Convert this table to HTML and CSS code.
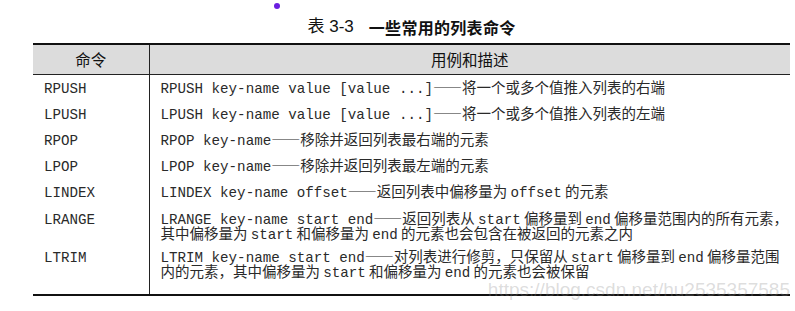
FILE: index.html
```html
<!DOCTYPE html>
<html lang="zh-CN">
<head>
  <meta charset="UTF-8" />
  <meta name="viewport" content="width=device-width, initial-scale=1.0"/>
  <title>表 3-3 一些常用的列表命令</title>
  <link rel="stylesheet" href="styles.css">
</head>
<body>
  <div class="page">
    <span class="dot"></span>
    <h1 class="caption"><span class="num">表 3-3</span><span class="name">一些常用的列表命令</span></h1>

    <table class="cmds">
      <colgroup><col class="c1"><col></colgroup>
      <thead>
        <tr><th class="col-cmd">命令</th><th>用例和描述</th></tr>
      </thead>
      <tbody>
        <tr>
          <td class="col-cmd"><div class="ln"><span class="k">RPUSH</span></div></td>
          <td><div class="ln"><span class="k">RPUSH key-name value [value ...]</span>——将一个或多个值推入列表的右端</div></td>
        </tr>
        <tr>
          <td class="col-cmd"><div class="ln"><span class="k">LPUSH</span></div></td>
          <td><div class="ln"><span class="k">LPUSH key-name value [value ...]</span>——将一个或多个值推入列表的左端</div></td>
        </tr>
        <tr>
          <td class="col-cmd"><div class="ln"><span class="k">RPOP</span></div></td>
          <td><div class="ln"><span class="k">RPOP key-name</span>——移除并返回列表最右端的元素</div></td>
        </tr>
        <tr>
          <td class="col-cmd"><div class="ln"><span class="k">LPOP</span></div></td>
          <td><div class="ln"><span class="k">LPOP key-name</span>——移除并返回列表最左端的元素</div></td>
        </tr>
        <tr>
          <td class="col-cmd"><div class="ln"><span class="k">LINDEX</span></div></td>
          <td><div class="ln"><span class="k">LINDEX key-name offset</span>——返回列表中偏移量为 <span class="k">offset</span> 的元素</div></td>
        </tr>
        <tr class="multi">
          <td class="col-cmd"><div class="ln"><span class="k">LRANGE</span></div></td>
          <td>
            <div class="ln"><span class="k">LRANGE key-name start end</span>——返回列表从 <span class="k">start</span> 偏移量到 <span class="k">end</span> 偏移量范围内的所有元素，</div>
            <div class="ln">其中偏移量为 <span class="k">start</span> 和偏移量为 <span class="k">end</span> 的元素也会包含在被返回的元素之内</div>
          </td>
        </tr>
        <tr class="multi last">
          <td class="col-cmd"><div class="ln"><span class="k">LTRIM</span></div></td>
          <td>
            <div class="ln"><span class="k">LTRIM key-name start end</span>——对列表进行修剪，只保留从 <span class="k">start</span> 偏移量到 <span class="k">end</span> 偏移量范围</div>
            <div class="ln">内的元素，其中偏移量为 <span class="k">start</span> 和偏移量为 <span class="k">end</span> 的元素也会被保留</div>
          </td>
        </tr>
      </tbody>
    </table>

    <div class="mark">https://blog.csdn.net/hu2535357585</div>
  </div>
</body>
</html>
```

FILE: styles.css
```css
* { box-sizing: border-box; margin: 0; padding: 0; }
body {
  background: #fff;
  color: #222;
  font-family: "Noto Sans CJK SC", "Liberation Sans", sans-serif;
}
.page {
  position: relative;
  width: 795px;
  height: 311px;
  padding: 17px 5px 0 33px;
}
.dot {
  position: absolute;
  left: 274px;
  top: 3px;
  width: 6px;
  height: 6px;
  border-radius: 50%;
  background: #6a1ee0;
}
.caption {
  display: flex;
  justify-content: center;
  align-items: center;
  height: 20px;
  margin-bottom: 6px;
  font-size: 16px;
  font-weight: normal;
  line-height: 20px;
  color: #111;
}
.caption .num {
  font-family: "Liberation Sans", "Noto Sans CJK SC", sans-serif;
  font-size: 17px;
  margin-right: 15px;
}
.caption .name {
  font-weight: bold;
  font-size: 16px;
  letter-spacing: 0.3px;
}
.cmds {
  width: 757px;
  table-layout: fixed;
  border-collapse: collapse;
  border-top: 2px solid #111;
}
.cmds .c1 { width: 116px; }
.cmds th {
  background: #dcdcdc;
  font-size: 15.5px;
  font-weight: normal;
  height: 30px;
  line-height: 18px;
  text-align: center;
  border-bottom: 1px solid #222;
  color: #111;
}
.cmds td {
  padding: 5px 11px 7px;
  font-size: 14.5px;
  white-space: nowrap;
  vertical-align: top;
  color: #2a2a2a;
}
.cmds .col-cmd {
  border-right: 1px solid #222;
}
.cmds tr.multi td {
  padding-bottom: 3px;
}
.cmds tr.multi .ln {
  height: 15px;
  line-height: 15px;
}
.cmds tr.last td {
  padding-bottom: 16px;
  border-bottom: 2px solid #111;
}
.ln {
  height: 14px;
  line-height: 14px;
}
.k {
  font-family: "Liberation Mono", monospace;
  font-size: 14.2px;
}
.mark {
  position: absolute;
  right: 5px;
  top: 280px;
  font-family: "Liberation Sans", sans-serif;
  font-size: 19px;
  line-height: 20px;
  color: rgba(140, 140, 140, 0.3);
}
```
